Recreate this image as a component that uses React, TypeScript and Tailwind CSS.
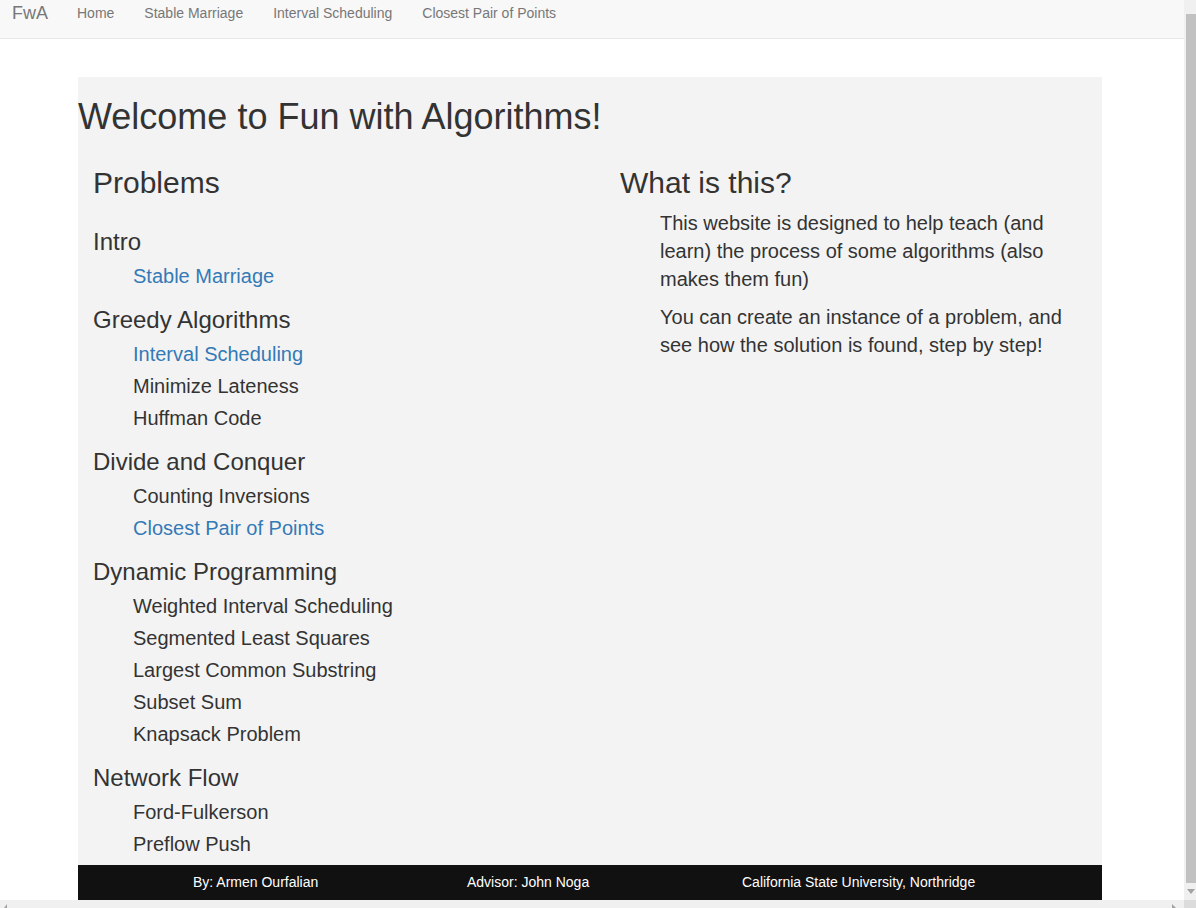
const navLinks = ["Home", "Stable Marriage", "Interval Scheduling", "Closest Pair of Points"];

type Item = { title: string; link?: boolean };

const sections: { title: string; items: Item[] }[] = [
  { title: "Intro", items: [{ title: "Stable Marriage", link: true }] },
  {
    title: "Greedy Algorithms",
    items: [
      { title: "Interval Scheduling", link: true },
      { title: "Minimize Lateness" },
      { title: "Huffman Code" },
    ],
  },
  {
    title: "Divide and Conquer",
    items: [{ title: "Counting Inversions" }, { title: "Closest Pair of Points", link: true }],
  },
  {
    title: "Dynamic Programming",
    items: [
      { title: "Weighted Interval Scheduling" },
      { title: "Segmented Least Squares" },
      { title: "Largest Common Substring" },
      { title: "Subset Sum" },
      { title: "Knapsack Problem" },
    ],
  },
  {
    title: "Network Flow",
    items: [{ title: "Ford-Fulkerson" }, { title: "Preflow Push" }],
  },
];

export default function App() {
  return (
    <div
      className="flex h-[908px] w-[1196px] flex-col overflow-hidden bg-white text-[#333]"
      style={{ fontFamily: '"Liberation Sans", Arial, sans-serif' }}
    >
      <div className="flex min-h-0 flex-1">
        {/* page */}
        <div className="flex w-[1184px] flex-col">
          <header className="flex h-[39px] items-start border-b border-[#e7e7e7] bg-[#f8f8f8]">
            <a className="ml-[12px] text-[18px] leading-[26px] text-[#777]">FwA</a>
            <nav className="ml-[29px] flex gap-[30px] pt-[3px]">
              {navLinks.map((l) => (
                <a key={l} className="text-[14px] leading-[20px] text-[#777]">
                  {l}
                </a>
              ))}
            </nav>
          </header>

          <main className="ml-[78px] mt-[38px] w-[1024px] bg-[#f3f3f3]">
            <h1 className="pt-[20px] text-[36px] leading-[40px]">Welcome to Fun with Algorithms!</h1>

            <div className="mt-[28px] grid grid-cols-[527px_1fr] pb-[5px] pr-[15px]">
              <div className="pl-[15px]">
                <h2 className="text-[30px] leading-[36px]">Problems</h2>
                <div className="mt-[23px] flex flex-col gap-[10px]">
                  {sections.map((s) => (
                    <div key={s.title}>
                      <h3 className="text-[24px] leading-[36px]">{s.title}</h3>
                      <ul className="pl-[40px]">
                        {s.items.map((it) => (
                          <li
                            key={it.title}
                            className={
                              "text-[20px] leading-[32px] " + (it.link ? "text-[#337ab7]" : "text-[#333]")
                            }
                          >
                            {it.title}
                          </li>
                        ))}
                      </ul>
                    </div>
                  ))}
                </div>
              </div>

              <div className="pl-[15px]">
                <h2 className="text-[30px] leading-[36px]">What is this?</h2>
                <div className="mt-[8px] pl-[40px] text-[20px] leading-[28px]">
                  <p className="mb-[10px]">
                    This website is designed to help teach (and learn) the process of some algorithms (also
                    makes them fun)
                  </p>
                  <p>You can create an instance of a problem, and see how the solution is found, step by step!</p>
                </div>
              </div>
            </div>

            <footer className="flex h-[35px] items-center bg-[#111] pl-[115px] text-[14px] text-white">
              <span className="w-[274px]">By: Armen Ourfalian</span>
              <span className="w-[275px]">Advisor: John Noga</span>
              <span>California State University, Northridge</span>
            </footer>
          </main>
        </div>

        {/* vertical scrollbar */}
        <div className="flex w-[12px] flex-col bg-[#f0f0f0] pl-[2px] pt-[14px]">
          <div className="flex-1 bg-[#c1c1c1]" />
          <div className="flex h-[17px] items-center justify-center pr-[1px]">
            <svg width="8" height="5" viewBox="0 0 8 5">
              <polygon points="0,0 8,0 4,5" fill="#a3a3a3" />
            </svg>
          </div>
        </div>
      </div>

      {/* horizontal scrollbar */}
      <div className="flex h-[8px]">
        <div className="flex flex-1 items-end justify-between bg-[#f0f0f0] px-[4px]">
          <svg width="3" height="4" viewBox="0 0 3 4">
            <polygon points="3,0 3,4 0,4" fill="#a3a3a3" />
          </svg>
          <svg width="4" height="4" viewBox="0 0 4 4" className="mr-[4px]">
            <polygon points="0,0 0,4 4,4" fill="#a3a3a3" />
          </svg>
        </div>
        <div className="w-[12px] bg-[#dcdcdc]" />
      </div>
    </div>
  );
}
